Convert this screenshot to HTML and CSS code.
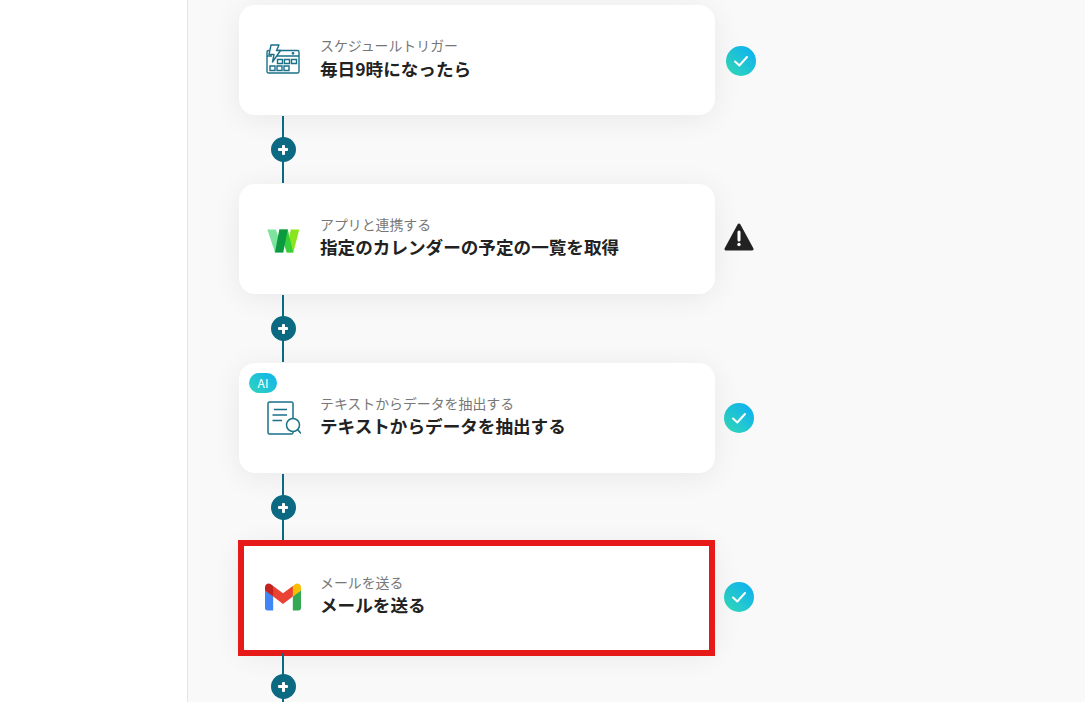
FILE: index.html
```html
<!DOCTYPE html>
<html lang="ja">
<head>
  <meta charset="UTF-8" />
  <meta name="viewport" content="width=device-width, initial-scale=1.0"/>
  <title>フローボット</title>
  <link rel="stylesheet" href="styles.css">
</head>
<body>
  <svg class="defs" width="0" height="0" aria-hidden="true">
    <defs>
      <linearGradient id="tealGrad" x1="0.12" y1="0.88" x2="0.88" y2="0.12">
        <stop offset="0" stop-color="#2fd6bc"/>
        <stop offset="1" stop-color="#0fb2ee"/>
      </linearGradient>
    </defs>
  </svg>

  <div class="layout">
    <aside class="sidebar"></aside>

    <main class="flow">
      <div class="step step-first">
        <div class="card">
          <svg class="app-icon" viewBox="0 0 36 36" fill="none" stroke="#1a7188" stroke-width="1.4">
            <path d="M11 8.500H32.500a1.500 1.500 0 0 1 1.500 1.500V29.500a1.500 1.500 0 0 1-1.500 1.500H3.500a1.500 1.500 0 0 1-1.500-1.500V10a1.500 1.500 0 0 1 1.500-1.500H4"/>
            <path d="M2 14H7M12 14H34"/>
            <path d="M6 3H14L11.500 8.500H15.500L7.500 20L9 12.500H4Z" fill="#fff" stroke-linejoin="round"/>
            <circle cx="28" cy="11.300" r=".7" fill="#1a7188"/>
            <path d="M12.500 17.500h5v4h-5zM19.500 17.500h5v4h-5zM26.500 17.500h5v4h-5zM5 24h5v4.500H5zM12 24h5v4.500h-5zM19 24h5v4.500h-5z"/>
          </svg>
          <div class="card-text">
            <div class="card-label">スケジュールトリガー</div>
            <div class="card-title">毎日9時になったら</div>
          </div>
        </div>
        <svg class="status" viewBox="0 0 30 30">
          <circle cx="15" cy="15" r="15" fill="url(#tealGrad)"/>
          <path d="M9 15.500L13.300 19.500L21 11" fill="none" stroke="#fff" stroke-width="2" stroke-linecap="round" stroke-linejoin="round"/>
        </svg>
      </div>

      <div class="connector">
        <span class="add-btn"></span>
      </div>

      <div class="step">
        <div class="card">
          <svg class="app-icon" viewBox="0 0 36 36">
            <path d="M2.300 8.500H11L18.300 31.500H10Z" fill="#7fe3a0"/>
            <path d="M25.700 8.500H34.300L28.300 31.500H21.700Z" fill="#8ae51e"/>
            <path d="M14.300 8.500H22.700L28.300 31.500H21.700Z" fill="#35d03a"/>
            <path d="M14.300 8.500H22.700L18.300 31.500H10Z" fill="#0c9a40"/>
          </svg>
          <div class="card-text">
            <div class="card-label">アプリと連携する</div>
            <div class="card-title">指定のカレンダーの予定の一覧を取得</div>
          </div>
        </div>
        <svg class="status status-warn" viewBox="0 0 30 28">
          <path d="M15 2L28 26H2Z" fill="#222" stroke="#222" stroke-width="3" stroke-linejoin="round"/>
          <path d="M15 9V17" stroke="#fff" stroke-width="3" stroke-linecap="round"/>
          <circle cx="15" cy="21.500" r="1.700" fill="#fff"/>
        </svg>
      </div>

      <div class="connector">
        <span class="add-btn"></span>
      </div>

      <div class="step">
        <div class="card">
          <span class="ai-badge">AI</span>
          <svg class="app-icon" viewBox="0 0 36 36" fill="none" stroke="#1a7188" stroke-width="1.500">
            <path d="M28 18V3.500A1.500 1.500 0 0 0 26.500 2H4.500A1.500 1.500 0 0 0 3 3.500V32.500A1.500 1.500 0 0 0 4.500 34H26.500A1.500 1.500 0 0 0 28 32.500V31.500"/>
            <path d="M9 9.500H22M7.500 15H22M7.500 20.500H17"/>
            <circle cx="28" cy="25" r="6.500" fill="#fff"/>
            <path d="M32.800 29.800L36 33.500"/>
          </svg>
          <div class="card-text">
            <div class="card-label">テキストからデータを抽出する</div>
            <div class="card-title">テキストからデータを抽出する</div>
          </div>
        </div>
        <svg class="status" viewBox="0 0 30 30">
          <circle cx="15" cy="15" r="15" fill="url(#tealGrad)"/>
          <path d="M9 15.500L13.300 19.500L21 11" fill="none" stroke="#fff" stroke-width="2" stroke-linecap="round" stroke-linejoin="round"/>
        </svg>
      </div>

      <div class="connector">
        <span class="add-btn"></span>
      </div>

      <div class="step">
        <div class="card">
          <svg class="app-icon" viewBox="0 0 256 193">
            <path d="M58.182 192.050V93.140L27.507 65.077 0 49.504v125.091c0 9.658 7.825 17.455 17.455 17.455h40.727Z" fill="#4285f4"/>
            <path d="M197.818 192.050h40.727c9.659 0 17.455-7.826 17.455-17.455V49.505l-31.156 17.837-27.026 25.798v98.910Z" fill="#34a853"/>
            <path d="M58.182 93.140l-4.174-38.647 4.174-36.989L128 69.868l69.818-52.364 4.669 34.992-4.669 40.644L128 145.504z" fill="#ea4335"/>
            <path d="M197.818 17.504V93.140L256 49.504V26.231c0-21.585-24.640-33.890-41.890-20.945l-16.292 12.218Z" fill="#fbbc04"/>
            <path d="M0 49.504l26.759 20.070L58.182 93.140V17.504L41.890 5.286C24.610-7.660 0 4.646 0 26.230v23.273Z" fill="#c5221f"/>
          </svg>
          <div class="card-text">
            <div class="card-label">メールを送る</div>
            <div class="card-title">メールを送る</div>
          </div>
          <div class="highlight"></div>
        </div>
        <svg class="status" viewBox="0 0 30 30">
          <circle cx="15" cy="15" r="15" fill="url(#tealGrad)"/>
          <path d="M9 15.500L13.300 19.500L21 11" fill="none" stroke="#fff" stroke-width="2" stroke-linecap="round" stroke-linejoin="round"/>
        </svg>
      </div>

      <div class="connector">
        <span class="add-btn"></span>
      </div>
    </main>
  </div>
</body>
</html>
```

FILE: styles.css
```css
html, body {
  margin: 0;
  padding: 0;
  height: 100%;
  overflow: hidden;
}

body {
  font-family: "Noto Sans CJK JP", "Noto Sans", sans-serif;
  background-color: #f9f9f9;
  color: #222;
}

.defs {
  display: block;
  height: 0;
}

.layout {
  display: flex;
  height: 702px;
}

.sidebar {
  width: 187px;
  flex-shrink: 0;
  background-color: #fff;
  border-right: 1px solid #e4e4e4;
}

.flow {
  flex: 1;
  display: flex;
  flex-direction: column;
  padding: 5px 0 0 51px;
}

.step {
  flex-shrink: 0;
  display: flex;
  align-items: center;
  gap: 9px;
}

.step-first {
  gap: 11px;
}

.step-first .status {
  margin-top: 2px;
}

.step-first .card-text {
  margin-top: -4px;
}

.step-first .card-title {
  margin-top: 1px;
}

.card {
  position: relative;
  flex-shrink: 0;
  box-sizing: border-box;
  width: 476px;
  height: 110px;
  display: flex;
  align-items: center;
  gap: 19px;
  padding-left: 26px;
  background-color: #fff;
  border-radius: 16px;
  box-shadow: 0 4px 30px rgba(0, 0, 0, 0.07);
}

.app-icon {
  width: 36px;
  height: 36px;
  flex-shrink: 0;
}

.card-text {
  display: flex;
  flex-direction: column;
  margin-top: -5px;
}

.card-label {
  font-size: 13.9px;
  line-height: 20px;
  color: #777;
}

.card-title {
  font-size: 17.6px;
  line-height: 26px;
  font-weight: 700;
  color: #222;
}

.status {
  width: 30px;
  height: 30px;
  flex-shrink: 0;
}

.status-warn {
  height: 28px;
  margin-top: -4px;
}

.ai-badge {
  position: absolute;
  top: 10px;
  left: 10px;
  width: 28px;
  height: 20px;
  border-radius: 10px;
  background: linear-gradient(45deg, #2fd6bc, #0fb2ee);
  color: #fff;
  font-size: 12px;
  line-height: 20px;
  text-align: center;
}

.highlight {
  position: absolute;
  top: -2px;
  left: -1px;
  right: 0;
  bottom: -4px;
  border: 6px solid #e71a1a;
}

.connector {
  position: relative;
  flex-shrink: 0;
  width: 2px;
  height: 67px;
  margin: 1px 0 1px 43px;
  background-color: #0b6a82;
}

.add-btn {
  position: absolute;
  top: 21px;
  left: -11.500px;
  width: 25px;
  height: 25px;
  border-radius: 50%;
  background-color: #0b6a82;
}

.add-btn::before,
.add-btn::after {
  content: "";
  position: absolute;
  background-color: #fff;
  border-radius: 1px;
}

.add-btn::before {
  top: 11px;
  left: 7.500px;
  width: 10px;
  height: 3px;
}

.add-btn::after {
  top: 7.500px;
  left: 11px;
  width: 3px;
  height: 10px;
}
```
